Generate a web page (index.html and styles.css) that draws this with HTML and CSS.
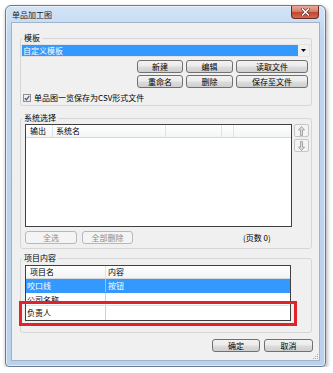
FILE: index.html
```html
<!DOCTYPE html>
<html lang="zh">
<head>
<meta charset="utf-8">
<title>单品加工图</title>
<link rel="stylesheet" href="styles.css">
</head>
<body>
<div class="window">
  <div class="titlebar">
    <span class="title">单品加工图</span>
    <div class="close">
      <svg width="9" height="8" viewBox="0 0 9 8"><path d="M1.5 1 L7.5 7 M7.5 1 L1.5 7" stroke="#5a2020" stroke-width="2.6" stroke-linecap="square"/><path d="M1.5 1 L7.5 7 M7.5 1 L1.5 7" stroke="#fff" stroke-width="1.5" stroke-linecap="square"/></svg>
    </div>
  </div>
  <div class="client">
    <fieldset class="group g1">
      <legend>模板</legend>
      <div class="combo">
        <span class="combo-value">自定义模板</span>
        <span class="combo-arrow"><svg width="5" height="3" viewBox="0 0 5 3"><polygon points="0,0 5,0 2.5,3" fill="#000"/></svg></span>
      </div>
      <div class="btn-grid">
        <button class="btn">新建</button>
        <button class="btn">编辑</button>
        <button class="btn">读取文件</button>
        <button class="btn">重命名</button>
        <button class="btn">删除</button>
        <button class="btn">保存至文件</button>
      </div>
      <label class="check">
        <span class="check-box"><svg width="6" height="6" viewBox="0 0 6 6"><path d="M0.8 3.2 L2.4 4.8 L5.3 0.9" fill="none" stroke="#4a5b8c" stroke-width="1.3"/></svg></span>
        <span>单品图一览保存为CSV形式文件</span>
      </label>
    </fieldset>

    <fieldset class="group g2">
      <legend>系统选择</legend>
      <div class="list-row">
        <div class="listbox">
          <div class="list-head">
            <span class="lh c1">输出</span>
            <span class="lh c2">系统名</span>
            <span class="lh c3"></span>
            <span class="lh c4"></span>
            <span class="lh c5"></span>
          </div>
        </div>
        <div class="side-btns">
          <button class="side-btn" disabled><svg width="7" height="10" viewBox="0 0 7 10"><polygon points="3.5,0.5 6.5,4 4.5,4 4.5,9.5 2.5,9.5 2.5,4 0.5,4" fill="#dcdcdc" stroke="#9d9d9d" stroke-width="0.9" stroke-linejoin="round"/></svg></button>
          <button class="side-btn" disabled><svg width="7" height="10" viewBox="0 0 7 10"><polygon points="3.5,9.5 6.5,6 4.5,6 4.5,0.5 2.5,0.5 2.5,6 0.5,6" fill="#dcdcdc" stroke="#9d9d9d" stroke-width="0.9" stroke-linejoin="round"/></svg></button>
        </div>
      </div>
      <div class="list-actions">
        <button class="btn btn-disabled w-all" disabled>全选</button>
        <button class="btn btn-disabled w-delall" disabled>全部删除</button>
        <span class="pages">(页数 0)</span>
      </div>
    </fieldset>

    <fieldset class="group g3">
      <legend>项目内容</legend>
      <div class="grid-wrap">
        <div class="grid">
          <div class="grid-head">
            <span class="gh gc1">项目名</span>
            <span class="gh gc2">内容</span>
          </div>
          <div class="grid-row selected r1">
            <span class="gd gc1">咬口线</span>
            <span class="gd gc2">按钮</span>
          </div>
          <div class="grid-row r2">
            <span class="gd gc1">公司名称</span>
            <span class="gd gc2"></span>
          </div>
          <div class="grid-row r3">
            <span class="gd gc1">负责人</span>
            <span class="gd gc2"></span>
          </div>
        </div>
        <div class="highlight"></div>
      </div>
    </fieldset>

    <div class="footer">
      <button class="btn w-ok">确定</button>
      <button class="btn w-cancel">取消</button>
    </div>
    <div class="grip"><svg width="7" height="7" viewBox="0 0 7 7"><g fill="#a8a8a8"><rect x="5" y="1" width="1" height="1"/><rect x="3" y="3" width="1" height="1"/><rect x="5" y="3" width="1" height="1"/><rect x="1" y="5" width="1" height="1"/><rect x="3" y="5" width="1" height="1"/><rect x="5" y="5" width="1" height="1"/></g></svg></div>
  </div>
</div>
</body>
</html>
```

FILE: styles.css
```css
* { box-sizing: border-box; }
html, body { margin: 0; padding: 0; background: #fff; }
body {
  font-family: "Noto Sans CJK SC", "Noto Sans", sans-serif;
  font-size: 8px;
  line-height: 10px;
  color: #000;
}

.window {
  margin: 5px 0 0 5px;
  width: 321px;
  height: 362px;
  border: 1px solid #6b7a8c;
  border-radius: 6px 6px 4px 4px;
  background: linear-gradient(#d3e4f7, #c0d6f0 30px, #bbd2ee);
  box-shadow: 1px 2px 4px rgba(0,0,0,.35), inset 0 0 0 1px rgba(255,255,255,.55);
  display: flex;
  flex-direction: column;
}

.titlebar {
  height: 16px;
  display: flex;
  justify-content: space-between;
  align-items: flex-start;
  padding: 0 6px 0 6px;
}
.title { padding-top: 4px; line-height: 10px; color: #1a1a1a; }
.close {
  width: 28px;
  height: 13px;
  border: 1px solid #6d2a22;
  border-top: none;
  border-radius: 0 0 4px 4px;
  background: linear-gradient(#e8a899, #d8806d 45%, #c2452f 52%, #cf6b52);
  display: flex;
  align-items: center;
  justify-content: center;
}

.client {
  position: relative;
  margin: 0 5px;
  height: 339px;
  border: 1px solid #9fb3cc;
  background: #f0f0f0;
  padding-top: 10px;
  display: flex;
  flex-direction: column;
}

.group {
  margin: 0 7px 0 8px;
  padding: 0 0 2px 0;
  border: 1px solid #d6d6d6;
  border-radius: 3px;
  min-width: 0;
}
.group legend {
  margin-left: 1px;
  padding: 0 2px;
  line-height: 10px;
  height: 10px;
}
.g2 { margin-top: 7px; padding-bottom: 4px; }
.g3 { margin-top: 4px; padding-bottom: 11px; }

.combo {
  margin: 1px 1px 0 0;
  height: 13px;
  border: 1px solid #e2e2e2;
  display: flex;
}
.combo-value {
  flex: 1;
  background: #3399ff;
  color: #fff;
  padding-left: 1px;
  line-height: 11px;
}
.combo-arrow {
  width: 11px;
  display: flex;
  align-items: center;
  justify-content: center;
}

.btn {
  font: inherit;
  padding: 0;
  margin: 0;
  height: 13px;
  line-height: 11px;
  border: 1px solid #707070;
  border-radius: 3px;
  background: linear-gradient(#f2f2f2, #ebebeb 48%, #dddddd 52%, #cfcfcf);
  color: #000;
  text-align: center;
}
.btn-disabled {
  border-color: #b5b9bc;
  background: #f4f4f4;
  color: #8d8d8d;
}

.btn-grid {
  margin: 3px 3px 0 0;
  display: grid;
  grid-template-columns: 46px 47px 72px;
  column-gap: 3px;
  row-gap: 2px;
  justify-content: end;
}

.check {
  margin: 5px 0 0 2px;
  height: 10px;
  display: flex;
  align-items: center;
  gap: 3px;
}
.check-box {
  width: 8px;
  height: 8px;
  border: 1px solid #8f8f8f;
  background: linear-gradient(#f4f4f4, #e2e2e2);
  display: flex;
  align-items: center;
  justify-content: center;
}

.list-row {
  margin: 1px 0 0 4px;
  display: flex;
  gap: 1px;
  align-items: flex-start;
}
.listbox {
  width: 267px;
  height: 103px;
  border: 1px solid #404040;
  background: #fff;
}
.list-head {
  height: 13px;
  display: flex;
  border-bottom: 1px solid #d8d8d8;
  background: linear-gradient(#ffffff, #f3f4f6);
}
.lh { border-right: 1px solid #e2e2e2; line-height: 12px; }
.c1 { width: 27px; padding-left: 4px; }
.c2 { width: 113px; padding-left: 3px; }
.c3 { width: 56px; }
.c4 { width: 12px; }
.c5 { flex: 1; border-right: none; }

.side-btns {
  display: flex;
  flex-direction: column;
  gap: 2px;
  margin-left: 1px;
}
.side-btn {
  width: 15px;
  height: 13px;
  padding: 0;
  border: 1px solid #c6c6c6;
  border-radius: 2px;
  background: #f4f4f4;
  display: flex;
  align-items: center;
  justify-content: center;
}

.list-actions {
  margin: 4px 0 0 4px;
  display: flex;
  align-items: center;
}
.w-all { width: 52px; }
.w-delall { width: 51px; margin-left: 5px; }
.pages { margin-left: 110px; }

.grid-wrap {
  position: relative;
  margin: 2px 0 0 4px;
  width: 266px;
}
.grid {
  border: 1px solid #404040;
  background: #fff;
}
.grid-head {
  height: 13px;
  display: flex;
  border-bottom: 1px solid #d8d8d8;
  background: linear-gradient(#ffffff, #f3f4f6);
}
.gh { line-height: 12px; }
.gh.gc1 { width: 80px; padding-left: 4px; border-right: 1px solid #e2e2e2; }
.gh.gc2 { flex: 1; padding-left: 2px; }
.grid-row {
  display: flex;
  border-bottom: 1px solid #e3e3e3;
}
.grid-row.r1 { height: 14px; }
.grid-row.r2 { height: 13px; }
.grid-row.r3 { height: 14px; border-bottom: none; }
.gd { line-height: 13px; padding-left: 1px; }
.gd.gc1 { width: 80px; border-right: 1px solid #d0d0d0; }
.gd.gc2 { flex: 1; padding-left: 2px; }
.selected { background: #3399ff; color: #fff; border-bottom-color: #3399ff; }
.selected .gd.gc1 { border-right-color: #8cc4ff; }

.highlight {
  position: absolute;
  left: -6px;
  top: 36px;
  width: 278px;
  height: 25px;
  border: 3px solid #e2222a;
}

.footer {
  margin: 6px 6px 0 0;
  display: flex;
  justify-content: flex-end;
  gap: 4px;
}
.w-ok { width: 48px; }
.w-cancel { width: 49px; }

.grip {
  position: absolute;
  right: 0;
  bottom: 0;
  width: 7px;
  height: 7px;
  line-height: 0;
}
```
